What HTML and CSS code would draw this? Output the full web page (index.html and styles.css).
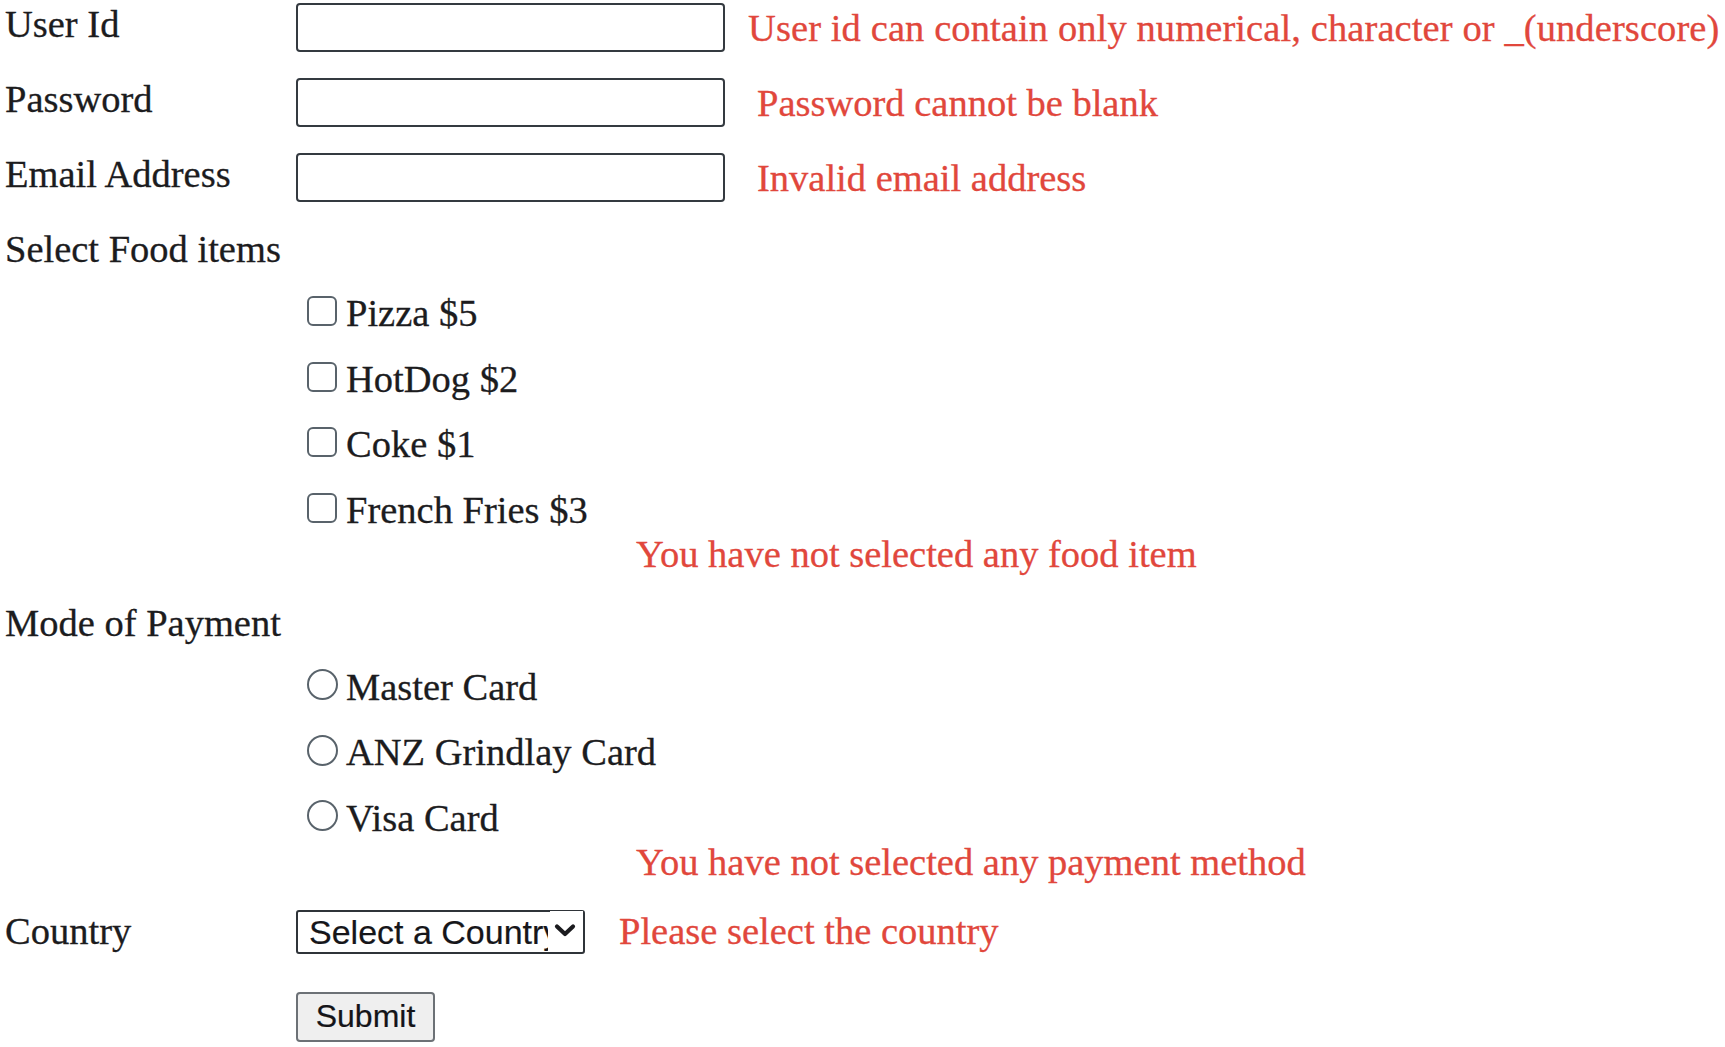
FILE: index.html
```html
<!DOCTYPE html>
<html lang="en">
<head>
<meta charset="utf-8">
<title>Order Form</title>
<link rel="stylesheet" href="styles.css">
</head>
<body>
<form class="form">
  <div class="field field-first">
    <label class="label">User Id</label>
    <input class="text-input" type="text">
    <span class="error error-tight">User id can contain only numerical, character or _(underscore)</span>
  </div>
  <div class="field">
    <label class="label">Password</label>
    <input class="text-input" type="password">
    <span class="error">Password cannot be blank</span>
  </div>
  <div class="field">
    <label class="label">Email Address</label>
    <input class="text-input" type="text">
    <span class="error">Invalid email address</span>
  </div>

  <div class="section-label">Select Food items</div>
  <div class="options">
    <label class="option"><input class="check" type="checkbox"><span>Pizza $5</span></label>
    <label class="option"><input class="check" type="checkbox"><span>HotDog $2</span></label>
    <label class="option"><input class="check" type="checkbox"><span>Coke $1</span></label>
    <label class="option"><input class="check" type="checkbox"><span>French Fries $3</span></label>
  </div>
  <div class="group-error">You have not selected any food item</div>

  <div class="section-label">Mode of Payment</div>
  <div class="options">
    <label class="option"><input class="radio" type="radio" name="pay"><span>Master Card</span></label>
    <label class="option"><input class="radio" type="radio" name="pay"><span>ANZ Grindlay Card</span></label>
    <label class="option"><input class="radio" type="radio" name="pay"><span>Visa Card</span></label>
  </div>
  <div class="group-error group-error-pay">You have not selected any payment method</div>

  <div class="field field-country">
    <label class="label label-centered">Country</label>
    <span class="select-wrap">
      <select class="select">
        <option>Select a Country</option>
        <option>India</option>
        <option>Australia</option>
      </select>
      <span class="chevron-box" aria-hidden="true">
        <svg class="chevron" width="22" height="15" viewBox="0 0 22 15"><path d="M3 3.5 L11 11 L19 3.5" fill="none" stroke="#1b1b1f" stroke-width="4.2" stroke-linecap="round" stroke-linejoin="round"/></svg>
      </span>
    </span>
    <span class="error error-country">Please select the country</span>
  </div>

  <div class="actions">
    <button class="submit" type="button">Submit</button>
  </div>
</form>
</body>
</html>
```

FILE: styles.css
```css
html, body {
  margin: 0;
  padding: 0;
  background: #ffffff;
}

body {
  font-family: "Liberation Serif", "Times New Roman", serif;
  font-size: 38.5px;
  color: #1c1c1e;
  -webkit-text-stroke: 0.3px currentColor;
  width: 1725px;
  height: 1047px;
  overflow: hidden;
}

.form {
  display: flex;
  flex-direction: column;
}

.field {
  display: flex;
  align-items: center;
  margin-top: 26px;
}

.field-first {
  margin-top: 3px;
}

.label {
  width: 296px;
  box-sizing: border-box;
  padding-left: 5px;
  padding-bottom: 7px;
  line-height: 40px;
  white-space: nowrap;
}

.label-centered {
  padding-bottom: 0;
}

.text-input {
  width: 429px;
  height: 49px;
  box-sizing: border-box;
  border: 2px solid #343a40;
  border-radius: 4px;
  margin: 0;
  padding: 0 6px;
  background: #ffffff;
  font: inherit;
  outline: none;
}

.error {
  color: #e1473c;
  line-height: 40px;
  white-space: nowrap;
  margin-left: 32px;
}

.error-tight {
  margin-left: 23px;
  letter-spacing: 0.1px;
}

.section-label {
  margin-top: 25px;
  padding-left: 5px;
  line-height: 44px;
  white-space: nowrap;
}

.options {
  display: flex;
  flex-direction: column;
  gap: 21.5px;
  margin-top: 20px;
  padding-left: 296px;
}

.option {
  display: flex;
  align-items: center;
  height: 44px;
  line-height: 44px;
  white-space: nowrap;
}

.check {
  -webkit-appearance: none;
  appearance: none;
  width: 30px;
  height: 30px;
  box-sizing: border-box;
  margin: 0 9px 4px 11px;
  border: 2.5px solid #59636b;
  border-radius: 6px;
  background: #ffffff;
  flex: none;
}

.radio {
  -webkit-appearance: none;
  appearance: none;
  width: 31px;
  height: 31px;
  box-sizing: border-box;
  margin: 0 8px 4px 11px;
  border: 2.5px solid #59636b;
  border-radius: 50%;
  background: #ffffff;
  flex: none;
}

.group-error {
  color: #e1473c;
  line-height: 44px;
  padding-left: 636px;
  white-space: nowrap;
}

.field-country {
  margin-top: 25px;
}

.select-wrap {
  position: relative;
  display: inline-block;
  width: 289px;
  height: 44px;
  flex: none;
}

.select {
  -webkit-appearance: none;
  appearance: none;
  width: 289px;
  height: 44px;
  box-sizing: border-box;
  margin: 0;
  border: 2px solid #2f3439;
  border-radius: 3px;
  background: #ffffff;
  padding: 0 35px 0 11px;
  font-family: "Liberation Sans", Arial, sans-serif;
  font-size: 34px;
  -webkit-text-stroke: 0.2px currentColor;
  color: #16161a;
  outline: none;
}

.chevron-box {
  position: absolute;
  top: 2px;
  right: 2px;
  bottom: 2px;
  width: 33px;
  background: #ffffff;
  display: flex;
  align-items: center;
  justify-content: flex-start;
  padding-left: 4px;
  box-sizing: border-box;
  pointer-events: none;
}

.error-country {
  margin-left: 34px;
}

.actions {
  margin-top: 39px;
  padding-left: 296px;
}

.submit {
  width: 139px;
  height: 50px;
  box-sizing: border-box;
  margin: 0;
  padding: 0 0 2px 0;
  border: 2px solid #6c7176;
  border-radius: 4px;
  background: #efefef;
  font-family: "Liberation Sans", Arial, sans-serif;
  font-size: 32px;
  -webkit-text-stroke: 0.2px currentColor;
  color: #141418;
}
```
